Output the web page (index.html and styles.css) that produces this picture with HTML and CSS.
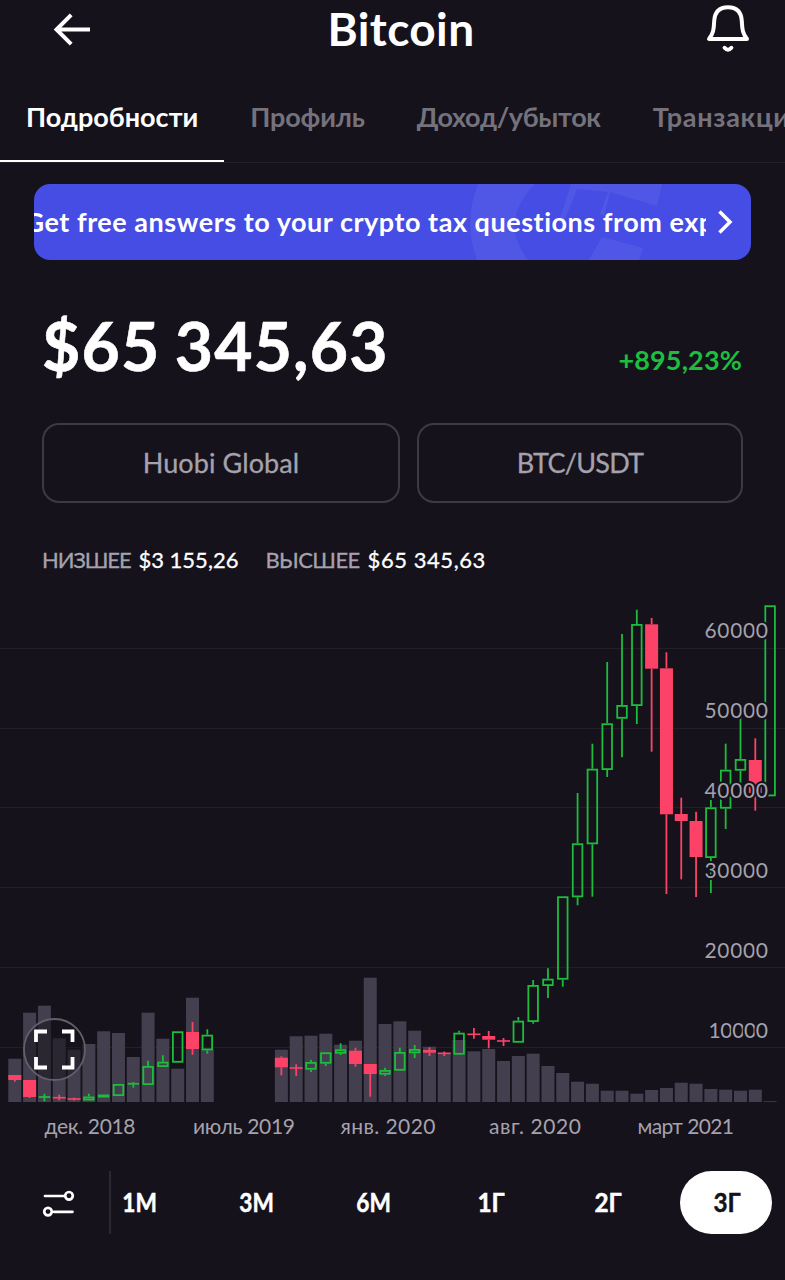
FILE: index.html
```html
<!DOCTYPE html>
<html lang="ru">
<head>
<meta charset="utf-8">
<title>Bitcoin</title>
<link rel="stylesheet" href="styles.css">
</head>
<body>
<header class="topbar">
  <svg class="back" width="40" height="36" viewBox="0 0 40 36"><path d="M38 17.5H4M19.2 2.8L4.5 17.5L19.2 32.2"/></svg>
  <h1 class="title">Bitcoin</h1>
  <svg class="bell" width="44" height="50" viewBox="0 0 44 50"><path d="M3 37H41C36 31 36.300 26 35.800 19C35.300 9.500 30 5.200 22 5.200S8.700 9.500 8.200 19C7.700 26 8 31 3 37Z"/><path d="M18.600 45.800Q22 49.800 25.400 45.800"/></svg>
</header>
<nav class="tabs">
  <span class="tab tab-active">Подробности</span>
  <span class="tab tab-profile">Профиль</span>
  <span class="tab tab-income">Доход/убыток</span>
  <span class="tab tab-trans">Транзакции</span>
</nav>
<main>
  <section class="banner">
    <svg class="watermark" width="200" height="76" viewBox="465 184 200 76"><path d="M478 184Q463 222 477 260H528Q498 222 535 184ZM625 184H662L657 206L610 192L604 216L600 214L608 192L577 189L563 224L559 222L571 184ZM602 237L643 248L639 260H589Z"/></svg>
    <div class="banner-clip"><span class="banner-text">Get free answers to your crypto tax questions from experts</span></div>
    <svg class="chevron" width="18" height="26" viewBox="0 0 18 26"><path d="M3.500 2.500L14 13L3.500 23.500"/></svg>
  </section>
  <section class="price-row">
    <span class="price">$65 345,63</span>
    <span class="change">+895,23%</span>
  </section>
  <section class="selectors">
    <div class="select">Huobi Global</div>
    <div class="select select-pair">BTC/USDT</div>
  </section>
  <section class="range">
    <span class="label low-label">НИЗШЕЕ</span><span class="low-value">$3 155,26</span>
    <span class="label high-label">ВЫСШЕЕ</span><span class="high-value">$65 345,63</span>
  </section>
  <section class="chart-wrap">
    <svg class="chart" id="chart" width="785" height="560" viewBox="0 590 785 560"></svg>
  </section>
</main>
<footer class="periods">
  <svg class="sliders" width="34" height="30" viewBox="0 0 34 30"><path d="M3 8H22M12 23.800H30.500"/><circle cx="27" cy="7.800" r="3.800"/><circle cx="6" cy="23.600" r="3.800"/></svg>
  <div class="divider"></div>
  <div class="period-list">
    <div class="period"><span class="narrow">1M</span></div>
    <div class="period"><span class="narrow">3M</span></div>
    <div class="period"><span class="narrow">6M</span></div>
    <div class="period"><span class="narrow wide">1Г</span></div>
    <div class="period"><span class="narrow wide">2Г</span></div>
    <div class="period period-active"><span class="narrow wide">3Г</span></div>
  </div>
</footer>
<script src="chart.js"></script>
</body>
</html>
```
FILE: styles.css
```css
* { box-sizing: border-box; }
body { margin: 0; width: 785px; height: 1280px; overflow: hidden; background: #15121c; color: #fff; font-family: Lato, "Noto Sans", sans-serif; font-variant-ligatures: none; display: flex; flex-direction: column; }
svg { display: block; flex: none; }
.topbar { height: 76px; padding: 0 35px 0 52px; display: grid; grid-template-columns: 40px 1fr 44px; align-items: start; }
.back { margin-top: 12px; fill: none; stroke: #fff; stroke-width: 4; }
.title { margin: 0 0 0 4px; text-align: center; font-size: 46px; line-height: 58px; font-weight: 700; letter-spacing: 0.4px; }
.bell { fill: none; stroke: #fff; stroke-width: 4; stroke-linejoin: round; stroke-linecap: round; margin-top: 2px; }
.tabs { height: 87px; display: flex; border-bottom: 1px solid #24212b; white-space: nowrap; overflow: hidden; }
.tab { flex: none; height: 86px; line-height: 81px; padding: 0 26px; font-size: 27px; font-weight: 700; color: #75727c; }
.tab-active { color: #fff; border-bottom: 2px solid #fff; }
.tab-profile { letter-spacing: -0.15px; }
.tab-income { letter-spacing: -0.35px; }
.tab-trans { letter-spacing: 0.7px; }
main { display: flex; flex-direction: column; }
.banner { position: relative; margin: 21px 34px 0 34px; height: 76px; border-radius: 16px; background: #454de4; display: flex; align-items: center; overflow: hidden; }
.watermark { position: absolute; left: 431px; top: 0; fill: #5057e6; }
.banner-clip { width: 672px; overflow: hidden; white-space: nowrap; display: flex; z-index: 1; }
.banner-text { font-size: 27px; line-height: 76px; font-weight: 700; letter-spacing: 0.53px; margin-left: -9.5px; }
.chevron { fill: none; stroke: #fff; stroke-width: 3.5; margin-left: 10px; }
.price-row { height: 163px; padding: 0 43px 0 42px; display: flex; justify-content: space-between; white-space: nowrap; }
.price { font-size: 66px; font-weight: 700; line-height: 172px; letter-spacing: 1.2px; word-spacing: -3px; -webkit-text-stroke: 0.6px; }
.change { font-size: 27px; font-weight: 700; color: #1dbe3e; line-height: 199px; letter-spacing: 0.15px; }
.selectors { padding: 0 42px; display: grid; grid-template-columns: 358px 326px; gap: 17px; }
.select { height: 80px; border: 2px solid #3d3a46; border-radius: 17px; padding-bottom: 2px; display: flex; align-items: center; justify-content: center; font-size: 27px; letter-spacing: 0.1px; color: #a5a2ad; -webkit-text-stroke: 0.3px; }
.select-pair { letter-spacing: -0.75px; }
.range { height: 87px; padding: 0 42px; display: flex; font-size: 22px; line-height: 113px; white-space: nowrap; -webkit-text-stroke: 0.3px; }
.label { color: #a5a2ad; margin-right: 8px; }
.low-label { letter-spacing: -1.15px; }
.high-label { letter-spacing: -0.6px; margin-left: 27px; }
.high-value { letter-spacing: 0.55px; }
.grid-line { stroke: #221f29; stroke-width: 1; }
.volume { fill: #433f4e; }
.up { stroke: #1cbc3c; stroke-width: 1.8; fill: none; }
.down { stroke: #fd4268; stroke-width: 1.8; fill: #fd4268; }
.down-body { fill: #fd4268; }
.chart text { font-size: 21px; fill: #a5a2ad; }
.price-tick { text-anchor: end; stroke: #15121c; stroke-width: 4; stroke-linejoin: round; paint-order: stroke; }
.expand-ring { fill: #15121c; fill-opacity: 0.55; stroke: #625e6b; stroke-width: 1.8; }
.expand-mark { fill: none; stroke: #fff; stroke-width: 3.8; }
.periods { height: 130px; padding: 21px 13px 0 42px; display: flex; }
.sliders { fill: none; stroke: #fff; stroke-width: 2.7; stroke-linecap: round; margin-top: 17px; }
.divider { flex: none; width: 2px; height: 63px; background: #2b2833; margin-left: 33px; }
.period-list { flex: none; display: grid; grid-template-columns: repeat(5, 117px) 92px; margin-left: -30px; }
.period { height: 63px; line-height: 61px; text-align: center; font-size: 27px; font-weight: 700; }
.period-active { margin-left: 14px; width: 92px; background: #fff; color: #15121c; border-radius: 32px; }
.narrow { display: inline-block; transform: scaleX(0.84); -webkit-text-stroke: 0.5px; }
.wide { transform: translateX(1px) scaleX(0.9); }
```
FILE: chart.js
```js
const NS = 'http://www.w3.org/2000/svg';
const svg = document.getElementById('chart');
const add = (name, attrs, text) => {
  const el = document.createElementNS(NS, name);
  for (const k in attrs) el.setAttribute(k, attrs[k]);
  if (text) el.textContent = text;
  svg.appendChild(el);
};
const centre = i => 14.8 + 14.81 * i;

[648.5, 728.5, 807.5, 887.5, 967.5, 1047.5].forEach(y =>
  add('line', { class: 'grid-line', x1: 0, x2: 785, y1: y, y2: y }));

// volume bar tops, keyed by the first column of each run
const volumes = {
  0: [1058.7, 1012.7, 1005.7, 1038.3, 1049.7, 1044, 1031.3, 1033, 1057, 1012.7, 1038.7, 1068.7, 997.7, 1049],
  18: [1049.7, 1036.3, 1035.7, 1033.7, 1044.7, 1040.7, 977.7, 1024, 1021.3, 1030.7, 1046.7, 1053, 1040,
    1051.3, 1049, 1061, 1056, 1053.7, 1066, 1073, 1081.7, 1083.7, 1090.7, 1090.7, 1093.7, 1090, 1088,
    1082.7, 1083.7, 1089, 1089.7, 1090.7, 1089.7, 1101.2]
};
for (const start in volumes)
  volumes[start].forEach((y, n) =>
    add('rect', { class: 'volume', x: centre(+start + n) - 6.5, y, width: 13, height: 1102 - y }));

// column, direction, high, body top, body bottom, low
const candles = [
  [0, 'd', 1075, 1075, 1080, 1081.7], [1, 'd', 1080, 1080, 1097, 1098], [2, 'u', 1093.7, 1097, 1097, 1101.5],
  [3, 'd', 1094.7, 1097.7, 1097.7, 1100.3], [4, 'd', 1097.7, 1099, 1099, 1100.5], [5, 'u', 1093.7, 1096.5, 1100.5, 1100.5],
  [6, 'u', 1094.5, 1094.5, 1097.5, 1097.5], [7, 'u', 1084, 1084, 1096, 1096], [8, 'u', 1082, 1083.8, 1084.8, 1087.7],
  [9, 'u', 1060.7, 1066, 1085, 1085], [10, 'u', 1055.3, 1061.7, 1067, 1067], [11, 'u', 1031.3, 1031.3, 1062.7, 1062.7],
  [12, 'd', 1022, 1032, 1049, 1054.7], [13, 'u', 1029.3, 1034.7, 1050.3, 1053.7],
  [18, 'd', 1056.3, 1057.7, 1067.3, 1075.3], [19, 'd', 1064.3, 1068, 1068, 1076], [20, 'u', 1059.7, 1062, 1069.7, 1072],
  [21, 'u', 1052.3, 1052.3, 1063.7, 1066], [22, 'u', 1043.3, 1049.3, 1053.7, 1055], [23, 'd', 1047.7, 1050.7, 1064, 1066.7],
  [24, 'd', 1064, 1064, 1074, 1096.7], [25, 'u', 1067.7, 1070, 1074.7, 1076], [26, 'u', 1047.7, 1052, 1070.7, 1070.7],
  [27, 'u', 1045, 1049, 1053.3, 1058], [28, 'd', 1047.3, 1050, 1052.7, 1056], [29, 'd', 1051.5, 1053.3, 1053.3, 1056],
  [30, 'u', 1030.7, 1032.7, 1054.7, 1054.7], [31, 'd', 1028, 1034.3, 1034.3, 1038.7], [32, 'd', 1031, 1036, 1039.7, 1048.3],
  [33, 'd', 1038, 1041, 1041, 1046], [34, 'u', 1017, 1020.7, 1042.7, 1042.7], [35, 'u', 980, 985, 1022, 1023.7],
  [36, 'u', 968.3, 978.7, 986, 998], [37, 'u', 896.3, 896.3, 979.7, 986.7], [38, 'u', 793, 843.3, 897.3, 905.3],
  [39, 'u', 743.7, 768.7, 844.3, 896.7], [40, 'u', 662, 723.3, 770, 777], [41, 'u', 634, 705, 718.7, 757.3],
  [42, 'u', 609.7, 624, 706, 724], [43, 'd', 618, 624.3, 668.7, 751.7], [44, 'd', 652.3, 668.3, 814.3, 894],
  [45, 'd', 797.7, 814, 821, 879.3], [46, 'd', 811.7, 821, 857, 897], [47, 'u', 800, 807.3, 858, 893],
  [48, 'u', 743.7, 769.7, 808.7, 829], [49, 'u', 716, 759, 770.7, 783], [50, 'd', 738.3, 760, 793, 810.7],
  [51, 'u', 605.3, 605.3, 796.3, 796.3]
];
for (const [i, dir, hi, top, bottom, lo] of candles) {
  const x = centre(i);
  const cls = dir === 'u' ? 'up' : 'down';
  if (hi < top) add('line', { class: cls, x1: x, x2: x, y1: hi, y2: top });
  if (lo > bottom) add('line', { class: cls, x1: x, x2: x, y1: bottom, y2: lo });
  if (dir === 'd')
    add('rect', { class: 'down-body', x: x - 6.5, y: bottom - top < 1 ? top - 0.8 : top, width: 13, height: Math.max(1.6, bottom - top) });
  else if (bottom - top < 2)
    add('line', { class: 'up', x1: x - 5.7, x2: x + 5.7, y1: top, y2: top });
  else
    add('rect', { class: 'up', x: x - 4.8, y: top + 0.9, width: 9.6, height: bottom - top - 1.8 });
}

[60000, 50000, 40000, 30000, 20000, 10000].forEach((v, n) =>
  add('text', { class: 'price-tick', x: 768, y: 638 + 79.9 * n, textLength: n === 5 ? 59.5 : 63.5 }, String(v)));

[['дек. 2018', 44.5, 91], ['июль 2019', 193, 102], ['янв. 2020', 340.5, 95], ['авг. 2020', 489, 92], ['март 2021', 637.5, 96.5]]
  .forEach(([label, x, textLength]) => add('text', { x, y: 1133.5, textLength }, label));

add('circle', { class: 'expand-ring', cx: 54.5, cy: 1049.5, r: 30.5 });
add('path', { class: 'expand-mark', d: 'M47 1031.500H36V1042M62 1031.500H72.500V1042M47 1067.500H36V1057M62 1067.500H72.500V1057' });
```
